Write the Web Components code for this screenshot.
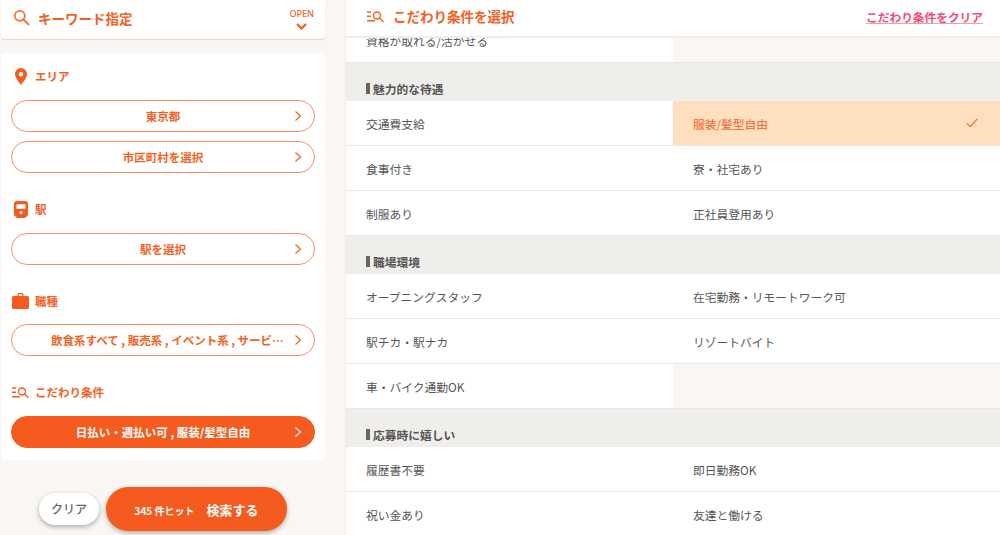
<!DOCTYPE html>
<html lang="ja">
<head>
<meta charset="utf-8">
<title>こだわり条件を選択</title>
<style>
    html, body { margin: 0; height: 100%; overflow: hidden; }
    body {
        font-family: "Noto Sans CJK JP", "Noto Sans", sans-serif;
        background: #f9f6f3;
    }
    job-search { display: flex; height: 535px; }
</style>
</head>
<body>
<job-search>
    <search-sidebar>
        <keyword-bar></keyword-bar>
        <filter-card>
            <filter-section label="エリア">
                <svg slot="icon" width="14" height="17" viewBox="0 0 14 17" style="margin-left:1px"><path fill="#f55a1e" fill-rule="evenodd" d="M7 0a6 6 0 0 1 6 6c0 4-4 8-6 11C5 14 1 10 1 6a6 6 0 0 1 6-6Zm0 4a2.2 2.2 0 1 0 0 4.4A2.2 2.2 0 0 0 7 4Z"/></svg>
                <pill-button>東京都</pill-button>
                <pill-button>市区町村を選択</pill-button>
            </filter-section>
            <filter-section label="駅">
                <svg slot="icon" width="14" height="17" viewBox="0 0 14 17" style="margin-left:1px"><path fill="#f55a1e" fill-rule="evenodd" d="M3 0h8a3 3 0 0 1 3 3v10a3 3 0 0 1-3 2.9l1 1.1H2l1-1.1A3 3 0 0 1 0 13V3a3 3 0 0 1 3-3Zm-.5 3.2v4.600h9V3.200ZM7 10a1.500 1.500 0 1 0 0 3 1.500 1.500 0 0 0 0-3Z"/></svg>
                <pill-button>駅を選択</pill-button>
            </filter-section>
            <filter-section label="職種">
                <svg slot="icon" width="17" height="16" viewBox="0 0 17 16" style="margin-left:-1px;flex:none"><path fill="#f55a1e" d="M5.500 3V1.500A1.500 1.500 0 0 1 7 0h3a1.500 1.500 0 0 1 1.500 1.500V3H15.500A1.500 1.500 0 0 1 17 4.500v10a1.500 1.500 0 0 1-1.500 1.500h-14A1.500 1.500 0 0 1 0 14.500v-10A1.500 1.500 0 0 1 1.500 3Zm1.300 0h3.400V1.300H6.800Z"/></svg>
                <pill-button long>飲食系すべて , 販売系 , イベント系 , サービス系 , 軽作業系</pill-button>
            </filter-section>
            <filter-section label="こだわり条件">
                <condition-icon slot="icon" style="margin-left:-1px;flex:none"></condition-icon>
                <pill-button active>日払い・週払い可 , 服装/髪型自由</pill-button>
            </filter-section>
        </filter-card>
        <search-footer count="345"></search-footer>
    </search-sidebar>
    <condition-panel>
        <condition-group>
            <condition-row>
                <condition-cell>資格が取れる/活かせる</condition-cell>
                <condition-cell empty></condition-cell>
            </condition-row>
        </condition-group>
        <condition-group label="魅力的な待遇">
            <condition-row>
                <condition-cell>交通費支給</condition-cell>
                <condition-cell selected>服装/髪型自由</condition-cell>
            </condition-row>
            <condition-row>
                <condition-cell>食事付き</condition-cell>
                <condition-cell>寮・社宅あり</condition-cell>
            </condition-row>
            <condition-row>
                <condition-cell>制服あり</condition-cell>
                <condition-cell>正社員登用あり</condition-cell>
            </condition-row>
        </condition-group>
        <condition-group label="職場環境">
            <condition-row>
                <condition-cell>オープニングスタッフ</condition-cell>
                <condition-cell>在宅勤務・リモートワーク可</condition-cell>
            </condition-row>
            <condition-row>
                <condition-cell>駅チカ・駅ナカ</condition-cell>
                <condition-cell>リゾートバイト</condition-cell>
            </condition-row>
            <condition-row>
                <condition-cell>車・バイク通勤OK</condition-cell>
                <condition-cell empty></condition-cell>
            </condition-row>
        </condition-group>
        <condition-group label="応募時に嬉しい">
            <condition-row>
                <condition-cell>履歴書不要</condition-cell>
                <condition-cell>即日勤務OK</condition-cell>
            </condition-row>
            <condition-row>
                <condition-cell>祝い金あり</condition-cell>
                <condition-cell>友達と働ける</condition-cell>
            </condition-row>
        </condition-group>
    </condition-panel>
</job-search>

<script>
class BaseElement extends HTMLElement {
    constructor() {
        super();
        this.attachShadow({ mode: 'open' }).innerHTML = this.render();
    }
}

class SearchSidebar extends BaseElement {
    render() {
        return `
            <style>
            :host {
                display: flex;
                flex-direction: column;
                flex: none;
                box-sizing: border-box;
                width: 345px;
                padding: 0 20px 0 1px;
                background: #f9f6f3;
            }
            </style>
            <slot></slot>
        `;
    }
}

class KeywordBar extends BaseElement {
    render() {
        return `
            <style>
            :host {
                display: flex;
                align-items: center;
                flex: none;
                box-sizing: border-box;
                height: 39px;
                padding: 0 11px 4px 12px;
                background: #fff;
                border-radius: 0 0 4px 4px;
                box-shadow: 0 1px 1px rgba(0, 0, 0, .12);
                color: #f4601f;
            }
            svg { flex: none; }
            .title { margin-left: 8px; font-size: 13.500px; font-weight: 700; }
            .open {
                display: flex;
                flex-direction: column;
                align-items: center;
                gap: 4px;
                margin-left: auto;
                font: 500 9px/10px "Noto Sans", sans-serif;
                margin-top: 3px;
            }
            </style>
            <svg width="17" height="17" viewBox="0 0 17 17" fill="none" stroke="#f4703a" stroke-width="1.800"><circle cx="6.800" cy="6.800" r="5"/><path d="m10.500 10.500 5 5" stroke-linecap="round"/></svg>
            <span class="title">キーワード指定</span>
            <span class="open">OPEN
                <svg width="11" height="7" viewBox="0 0 11 7" fill="none" stroke="#f4601f" stroke-width="2.200"><path d="m1 1 4.500 4.500L10 1"/></svg>
            </span>
        `;
    }
}

class FilterCard extends BaseElement {
    render() {
        return `
            <style>
            :host {
                display: flex;
                flex-direction: column;
                gap: 26px;
                flex: none;
                box-sizing: border-box;
                height: 407px;
                margin-top: 14px;
                padding: 13px 10px 0;
                background: #fff;
                border-radius: 4px;
            }
            </style>
            <slot></slot>
        `;
    }
}

class FilterSection extends BaseElement {
    render() {
        return `
            <style>
            :host { display: block; }
            .head {
                display: flex;
                align-items: center;
                gap: 6px;
                height: 20px;
                margin: 0 0 13.500px 2px;
                color: #f4601f;
                font-size: 11.500px;
                font-weight: 700;
            }
            .icon { display: flex; flex: none; width: 16px; justify-content: flex-start; }
            .list { display: flex; flex-direction: column; gap: 9.500px; }
            </style>
            <div class="head">
                <span class="icon"><slot name="icon"></slot></span>
                <span>${this.getAttribute('label')}</span>
            </div>
            <div class="list"><slot></slot></div>
        `;
    }
}

class PillButton extends BaseElement {
    render() {
        return `
            <style>
            :host {
                display: block;
                --bg: #fff;
                --fg: #f4601f;
                --line: #fa8f66;
                color: var(--fg);
            }
            :host([active]) { --bg: #f55a1e; --fg: #fff; --line: #f55a1e; }
            button {
                display: flex;
                align-items: center;
                box-sizing: border-box;
                width: 100%;
                height: 32px;
                padding: 0 12px 0 39px;
                background: var(--bg);
                border: 1px solid var(--line);
                border-radius: 16px;
                color: inherit;
                font: inherit;
                font-size: 11.500px;
                font-weight: 700;
            }
            .label {
                flex: 1;
                min-width: 0;
                margin-right: 8px;
                padding-right: 11px;
                overflow: hidden;
                text-align: center;
                text-overflow: ellipsis;
                white-space: nowrap;
            }
            :host([long]) .label { padding-right: 0; text-align: left; }
            svg { flex: none; }
            </style>
            <button>
                <span class="label"><slot></slot></span>
                <svg width="8" height="12" viewBox="0 0 8 12" fill="none" stroke="currentColor" stroke-width="1.200"><path d="m1.500 1.500 5 4.500-5 4.500"/></svg>
            </button>
        `;
    }
}

class ConditionIcon extends BaseElement {
    render() {
        return `
            <style>
            :host { display: inline-flex; }
            </style>
            <svg width="17" height="11" viewBox="0 0 17 11" fill="none" stroke="#f4601f" stroke-width="1.400">
                <path d="M0 1h4M0 5.300h4M0 9.700h8"/>
                <circle cx="10" cy="4.500" r="3.500"/>
                <path d="m12.500 7 3.500 3.500" stroke-linecap="round"/>
            </svg>
        `;
    }
}

class SearchFooter extends BaseElement {
    render() {
        return `
            <style>
            :host {
                display: flex;
                align-items: center;
                gap: 7px;
                flex: none;
                margin-top: 27px;
                padding-left: 38px;
            }
            button { border: 0; font-family: inherit; }
            .clear {
                width: 60px;
                height: 32px;
                padding: 0 0 2px;
                background: #fff;
                border-radius: 16px;
                box-shadow: 0 2px 5px rgba(0, 0, 0, .3);
                color: #666;
                font-size: 12px;
                font-weight: 500;
            }
            .search {
                display: flex;
                align-items: baseline;
                justify-content: center;
                gap: 12px;
                width: 181px;
                height: 44px;
                padding: 13px 0 0;
                box-sizing: border-box;
                background: #f55a1e;
                border-radius: 22px;
                box-shadow: 0 2px 5px rgba(0, 0, 0, .3);
                color: #fff;
                font-weight: 700;
            }
            .hit { font-size: 10px; }
            .go { font-size: 13px; }
            </style>
            <button class="clear">クリア</button>
            <button class="search">
                <span class="hit">${this.getAttribute('count')} 件ヒット</span>
                <span class="go">検索する</span>
            </button>
        `;
    }
}

class ConditionPanel extends BaseElement {
    render() {
        return `
            <style>
            :host {
                display: flex;
                flex-direction: column;
                flex: 1;
                min-width: 0;
                height: 535px;
                background: #fff;
                border-left: 1px solid #eeeceb;
            }
            header {
                position: relative;
                z-index: 1;
                display: flex;
                align-items: center;
                flex: none;
                box-sizing: border-box;
                height: 38px;
                padding: 0 17px 4px 21px;
                background: #fff;
                border-bottom: 2px solid #f0eeeb;
            }
            h2 {
                margin: 0 0 0 9px;
                color: #f4601f;
                font-size: 13.500px;
                font-weight: 700;
            }
            a {
                margin-left: auto;
                color: #ee4e76;
                font-size: 11.700px;
                font-weight: 700;
                text-decoration: underline;
                text-decoration-color: #f79ab2;
            }
            .scroll { flex: 1; min-height: 0; overflow: hidden; }
            .inner { margin-top: -20px; }
            </style>
            <header>
                <condition-icon></condition-icon>
                <h2>こだわり条件を選択</h2>
                <a>こだわり条件をクリア</a>
            </header>
            <div class="scroll"><div class="inner"><slot></slot></div></div>
        `;
    }
}

class ConditionGroup extends BaseElement {
    render() {
        const label = this.getAttribute('label');
        return `
            <style>
            :host { display: block; }
            .head {
                display: flex;
                align-items: center;
                gap: 3px;
                box-sizing: border-box;
                height: 38px;
                padding: 17px 0 4px 20px;
                background: #f0eeeb;
                color: #555;
                font-size: 11.750px;
                font-weight: 700;
            }
            .head::before { content: ""; flex: none; width: 4px; height: 11px; background: #666; }
            </style>
            ${label ? `<div class="head">${label}</div>` : ''}
            <slot></slot>
        `;
    }
}

class ConditionRow extends BaseElement {
    render() {
        return `
            <style>
            :host {
                display: grid;
                grid-template-columns: 327px 327px;
                box-sizing: border-box;
                height: 45px;
                border-bottom: 1px solid #e9e7e6;
            }
            </style>
            <slot></slot>
        `;
    }
}

class ConditionCell extends BaseElement {
    render() {
        return `
            <style>
            :host {
                display: flex;
                align-items: center;
                justify-content: space-between;
                padding: 0 22px 0 20px;
                color: #555;
                font-size: 11.750px;
            }
            :host([empty]) { background: #f9f6f3; }
            :host([selected]) { background: #fedfc0; color: #f4601f; }
            svg { display: none; }
            :host([selected]) svg { display: block; }
            </style>
            <span><slot></slot></span>
            <svg width="12" height="10" viewBox="0 0 12 10" fill="none" stroke="#f4703a" stroke-width="1.200"><path d="m.8 5.200 3.500 3.500L11.200 1"/></svg>
        `;
    }
}

customElements.define('search-sidebar', SearchSidebar);
customElements.define('keyword-bar', KeywordBar);
customElements.define('filter-card', FilterCard);
customElements.define('filter-section', FilterSection);
customElements.define('pill-button', PillButton);
customElements.define('condition-icon', ConditionIcon);
customElements.define('search-footer', SearchFooter);
customElements.define('condition-panel', ConditionPanel);
customElements.define('condition-group', ConditionGroup);
customElements.define('condition-row', ConditionRow);
customElements.define('condition-cell', ConditionCell);
</script>
</body>
</html>
